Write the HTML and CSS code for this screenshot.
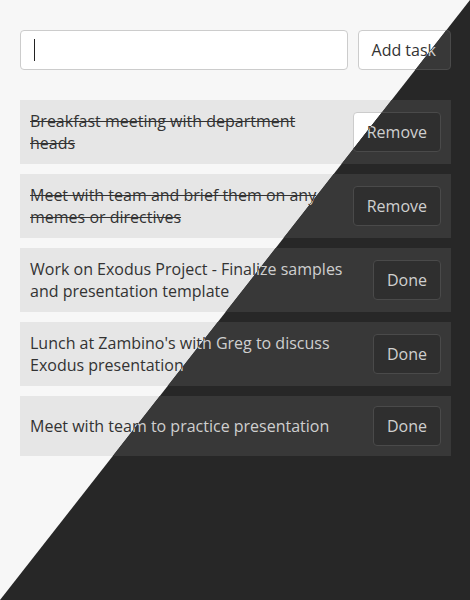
FILE: index.html
```html
<!DOCTYPE html>
<html lang="en">
<head>
<meta charset="utf-8">
<title>Tasks</title>
<link rel="stylesheet" href="styles.css">
</head>
<body>
<div class="app light">
  <form class="add-row">
    <div class="field caret"><input class="task-input" type="text" aria-label="New task"></div>
    <button class="btn add-btn" type="button">Add task</button>
  </form>
  <ul class="tasks">
    <li class="task done"><span class="text">Breakfast meeting with department heads</span><button class="btn" type="button">Remove</button></li>
    <li class="task done"><span class="text">Meet with team and brief them on any memes or directives</span><button class="btn" type="button">Remove</button></li>
    <li class="task"><span class="text">Work on Exodus Project - Finalize samples and presentation template</span><button class="btn" type="button">Done</button></li>
    <li class="task"><span class="text">Lunch at Zambino's with Greg to discuss Exodus presentation</span><button class="btn" type="button">Done</button></li>
    <li class="task"><span class="text">Meet with team to practice presentation</span><button class="btn" type="button">Done</button></li>
  </ul>
</div>
<div class="app dark overlay" aria-hidden="true">
  <form class="add-row">
    <div class="field"><input class="task-input" type="text" tabindex="-1"></div>
    <button class="btn add-btn" type="button" tabindex="-1">Add task</button>
  </form>
  <ul class="tasks">
    <li class="task done"><span class="text">Breakfast meeting with department heads</span><button class="btn" type="button" tabindex="-1">Remove</button></li>
    <li class="task done"><span class="text">Meet with team and brief them on any memes or directives</span><button class="btn" type="button" tabindex="-1">Remove</button></li>
    <li class="task"><span class="text">Work on Exodus Project - Finalize samples and presentation template</span><button class="btn" type="button" tabindex="-1">Done</button></li>
    <li class="task"><span class="text">Lunch at Zambino's with Greg to discuss Exodus presentation</span><button class="btn" type="button" tabindex="-1">Done</button></li>
    <li class="task"><span class="text">Meet with team to practice presentation</span><button class="btn" type="button" tabindex="-1">Done</button></li>
  </ul>
</div>
</body>
</html>
```
FILE: styles.css
```css
html, body {
  margin: 0;
  padding: 0;
  height: 100%;
}
body {
  position: relative;
  overflow: hidden;
  font-family: "Open Sans", "Noto Sans", sans-serif;
  font-size: 16px;
  line-height: 22px;
}
.app {
  box-sizing: border-box;
  width: 470px;
  height: 600px;
  padding: 30px 19px 20px 20px;
}
.overlay {
  position: absolute;
  left: 0;
  top: 0;
  clip-path: polygon(100% 0, 100% 100%, 0 100%);
}
.add-row {
  display: flex;
  gap: 10px;
  margin: 0 0 30px 0;
}
.field {
  flex: 1;
  display: flex;
  position: relative;
}
.task-input {
  flex: 1;
  box-sizing: border-box;
  height: 40px;
  margin: 0;
  padding: 0 12px;
  border: 1px solid;
  border-radius: 4px;
  font: inherit;
  outline: none;
}
.caret::after {
  content: "";
  position: absolute;
  left: 14px;
  top: 9px;
  width: 1px;
  height: 22px;
  background: #222;
}
.btn {
  box-sizing: border-box;
  height: 40px;
  margin: 0;
  padding: 0 13px;
  border: 1px solid;
  border-radius: 4px;
  font: inherit;
  line-height: 22px;
  flex: none;
}
.add-btn {
  padding: 0 14px 0 13px;
}
.tasks {
  list-style: none;
  margin: 0;
  padding: 0;
  display: flex;
  flex-direction: column;
  gap: 10px;
}
.task {
  display: flex;
  align-items: center;
  gap: 14px;
  min-height: 60px;
  box-sizing: border-box;
  padding: 10px;
}
.text {
  flex: 1;
  min-width: 0;
}
.done .text {
  text-decoration: line-through;
}

/* light theme */
.light { background: #f7f7f7; color: #333; }
.light .task { background: #e6e6e6; }
.light .task-input { background: #fff; border-color: #ccc; color: #333; }
.light .btn { background: #fff; border-color: #ccc; color: #333; }

/* dark theme */
.dark { background: #272727; color: #cfcfcf; }
.dark .task { background: #383838; }
.dark .task-input { background: #383838; border-color: #4a4a4a; color: #ccc; }
.dark .btn { background: #2f2f2f; border-color: #4a4a4a; color: #cfcfcf; }
.dark .add-row .btn { background: #383838; }
```
